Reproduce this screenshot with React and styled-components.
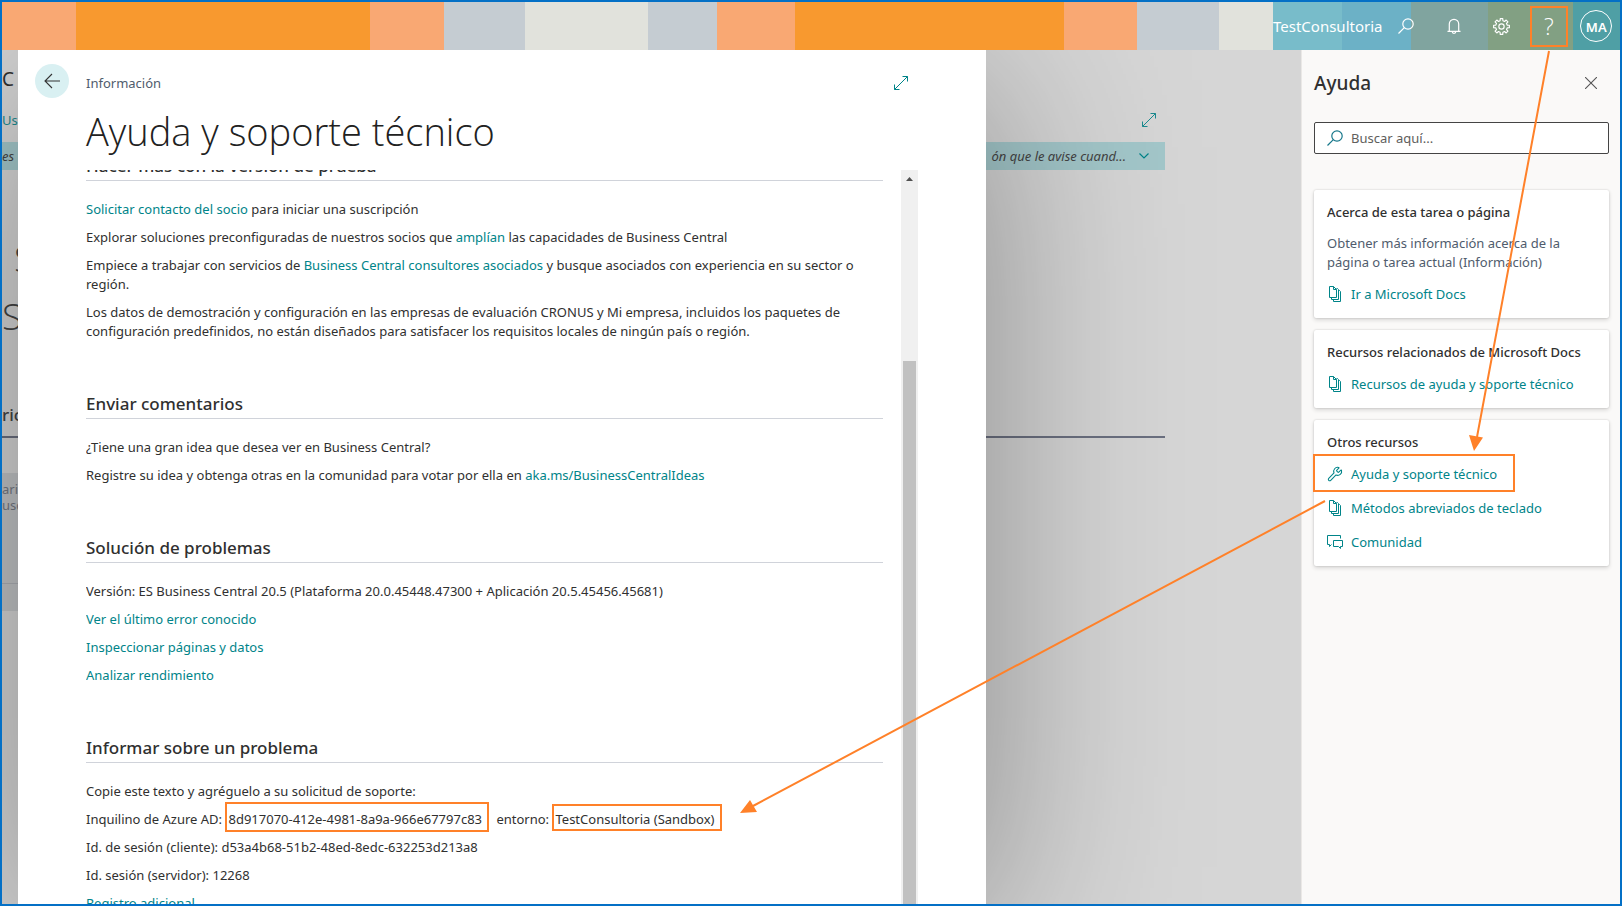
import React, { useState } from 'react'
import styled, { createGlobalStyle } from 'styled-components'
import { Wrench } from 'lucide-react'

const teal = '#008489'
const orange = '#ff8129'

const GlobalStyle = createGlobalStyle`
  *, *::before, *::after {
    box-sizing: border-box;
  }
  body {
    margin: 0;
    color: #303030;
    font: 13px/19px 'Noto Sans', 'Open Sans', sans-serif;
  }
  h1, h2, h3, p, ul {
    margin: 0;
    padding: 0;
  }
  button {
    padding: 0;
    border: none;
    background: none;
    font: inherit;
    color: inherit;
    cursor: pointer;
  }
  a {
    color: ${teal};
    text-decoration: none;
  }
  svg {
    display: block;
    flex-shrink: 0;
  }
`

const Frame = styled.div`
  position: relative;
  display: flex;
  flex-direction: column;
  height: 100vh;
  border: 2px solid #0470c6;
  overflow: hidden;
`
const TopBar = styled.header`
  display: flex;
  flex: none;
  height: 48px;
  background: linear-gradient(
    90deg,
    #f9a873 74px,
    #f8992f 74px 368px,
    #f9a873 368px 442px,
    #c5ccd2 442px 523px,
    #e1e2dc 523px 646px,
    #c5ccd2 646px 715px,
    #f9a873 715px 793px,
    #f8992f 793px 1062px,
    #f9a873 1062px 1135px,
    #c5ccd2 1135px 1217px,
    #e1e2dc 1217px
  );
`
const Shell = styled.div`
  display: flex;
  align-items: center;
  width: 347px;
  margin-left: auto;
  color: #fff;
  background: linear-gradient(
    90deg,
    #78bcca 69px,
    #6cb1c6 69px 138px,
    #80a49f 138px 215px,
    #82a083 215px 300px,
    #4f9fa5 300px
  );
`
const Environment = styled.span`
  flex: 1;
  font-size: 15px;
  line-height: 20px;
`
const ShellButton = styled.button`
  display: flex;
  align-items: center;
  justify-content: center;
  width: 48px;
  height: 48px;
`
const HelpMark = styled.span`
  display: flex;
  align-items: center;
  justify-content: center;
  width: 38px;
  height: 41px;
  border: 2px solid ${orange};
  font: 300 23px/30px 'Open Sans', sans-serif;
`
const Avatar = styled.span`
  width: 32px;
  height: 32px;
  border: 1px solid #fff;
  border-radius: 50%;
  font-size: 13px;
  font-weight: 600;
  line-height: 32px;
  text-align: center;
`
const Body = styled.div`
  display: flex;
  flex: 1;
  min-height: 0;
`

const Workspace = styled.main`
  position: relative;
  flex: 1;
  min-width: 0;
  overflow: hidden;
  background: #d6d6d6;
`
const Page = styled.div`
  padding: 15px 136px 0 0;
`
const PageBrand = styled.div`
  height: 28px;
  font-size: 19px;
  line-height: 28px;
`
const PageNav = styled.div`
  display: flex;
  align-items: center;
  justify-content: space-between;
  height: 49px;
  padding: 5px 8px 0 0;
  color: #1b8a8f;
`
const PageNotice = styled.div`
  display: flex;
  align-items: center;
  height: 28px;
  padding-right: 16px;
  gap: 13px;
  background: #a3c7ca;
  color: #444;
  font-style: italic;
  white-space: nowrap;
`
const NoticeEnd = styled.span`
  margin-left: auto;
`
const PageHeading = styled.div`
  margin-top: 59px;
  font: 300 37px/58px 'Open Sans', sans-serif;
  text-indent: -8px;
  color: #444;
`
const HeadingFirst = styled.div`
  padding-left: 20px;
`
const PageTab = styled.div`
  margin-top: 58px;
  height: 35px;
  border-bottom: 2px solid #6b7080;
  font-size: 17px;
  font-weight: 500;
  line-height: 24px;
  color: #444;
`
const PageTile = styled.div`
  width: 400px;
  height: 138px;
  margin-top: 35px;
  padding-top: 8px;
  background: #c3c5c7;
  color: #757a84;
  line-height: 16px;
`
const TileRule = styled.div`
  height: 71px;
  border-bottom: 1px solid #aeb1b6;
`

const Dialog = styled.section`
  position: absolute;
  inset: 0 315px 0 16px;
  display: flex;
  flex-direction: column;
  background: #fff;
  box-shadow: 0 30px 190px rgba(0, 0, 0, 0.37);
`
const DialogBar = styled.div`
  display: flex;
  align-items: center;
  gap: 17px;
  height: 52px;
  padding: 14px 77px 0 17px;
  color: #505c6d;
`
const BackButton = styled.button`
  display: flex;
  align-items: center;
  justify-content: center;
  align-self: flex-start;
  width: 34px;
  height: 34px;
  border-radius: 50%;
  background: #d9f0f2 !important;
  color: #333 !important;
`
const ExpandButton = styled.button`
  margin-left: auto;
  color: ${teal} !important;
`
const DialogTitle = styled.h1`
  margin: 4px 0 14px;
  padding-left: 68px;
  font: 300 38px/50px 'Open Sans', sans-serif;
  color: #212121;
`
const DialogBody = styled.div`
  display: flex;
  flex: 1;
  gap: 18px;
  min-height: 0;
  padding: 0 68px;
`
const Content = styled.div`
  flex: 1;
  overflow: hidden;
`
/* the list is scrolled past the top of its first heading */
const Scrolled = styled.div`
  display: flex;
  flex-direction: column;
  gap: 51px;
  margin-top: -16px;
`
const Section = styled.section`
  display: flex;
  flex-direction: column;
  gap: 9px;
`
const SectionTitle = styled.h2`
  margin-bottom: 10px;
  padding-bottom: 2px;
  border-bottom: 1px solid #d0d3da;
  font-size: 17px;
  font-weight: 500;
  line-height: 24px;
`
const IdMark = styled.mark`
  margin-right: 4px;
  padding: 6px 5px 2px 1px;
  border: 2px solid ${orange};
  background: none;
  color: inherit;
`
const EnvMark = styled(IdMark)`
  padding: 4px 6px 1px 1px;
`
const Scrollbar = styled.div`
  display: flex;
  flex-direction: column;
  align-items: center;
  gap: 180px;
  width: 17px;
  padding-top: 7px;
  background: #f0f0f0;
`
const Thumb = styled.div`
  flex: 1;
  width: 13px;
  background: #c1c1c1;
`

const HelpPane = styled.aside`
  display: flex;
  flex-direction: column;
  width: 319px;
  padding: 19px 11px 0 12px;
  border-left: 1px solid #eae8e6;
  background: #faf9f8;
`
const PaneHeader = styled.div`
  display: flex;
  align-items: center;
  justify-content: space-between;
  padding-right: 12px;
`
const PaneTitle = styled.h2`
  font-size: 19px;
  font-weight: 500;
  line-height: 28px;
`
const SearchBox = styled.label`
  display: flex;
  align-items: center;
  gap: 8px;
  height: 32px;
  margin: 25px 0 36px;
  padding: 0 12px;
  border: 1px solid #444;
  border-radius: 2px;
  background: #fff;
  color: #16778a;
`
const SearchInput = styled.input`
  flex: 1;
  min-width: 0;
  padding: 0;
  border: none;
  outline: none;
  font: inherit;
  color: #303030;
  &::placeholder {
    color: #605e5c;
    opacity: 1;
  }
`
const Cards = styled.div`
  display: flex;
  flex-direction: column;
  gap: 12px;
`
const Card = styled.section`
  display: flex;
  flex-direction: column;
  gap: 12px;
  padding: 12px 13px 14px;
  border-radius: 2px;
  background: #fff;
  box-shadow: 0 0 2px rgba(0, 0, 0, 0.18), 0 2px 4px rgba(0, 0, 0, 0.14);
`
const CardTitle = styled.h3`
  font-size: 13px;
  font-weight: 500;
  line-height: 20px;
`
const CardText = styled.p`
  color: #505c6d;
`
const LinkList = styled.ul`
  display: flex;
  flex-direction: column;
  gap: 14px;
  list-style: none;
`
const ResourceLink = styled.a`
  position: relative;
  display: flex;
  align-items: center;
  gap: 8px;
  line-height: 20px;
  ${(props) =>
    props.$marked &&
    `&::after {
      content: '';
      position: absolute;
      inset: -10px auto -8px -14px;
      width: 202px;
      border: 2px solid ${orange};
    }`}
`
const Arrows = styled.svg`
  position: absolute;
  top: -2px;
  left: -2px;
  pointer-events: none;
`

const SearchIcon = () => (
  <svg width="16" height="16" viewBox="0 0 16 16" fill="none" stroke="currentColor" strokeWidth="1.2">
    <circle cx="10" cy="6" r="5.2" />
    <path d="M6.3 9.7L.5 15.5" />
  </svg>
)
const BellIcon = () => (
  <svg width="16" height="16" viewBox="0 0 16 16" fill="none" stroke="currentColor" strokeWidth="1.2">
    <path d="M1.5 13.3h13M3.3 13.3V6a4.7 4.7 0 0 1 9.4 0v7.3M6.2 13.6a1.8 1.8 0 0 0 3.6 0" />
  </svg>
)

const gearPoints = Array.from({ length: 8 }, (_, i) =>
  [
    [-14, 5.5],
    [-9, 7.5],
    [9, 7.5],
    [14, 5.5],
  ]
    .map(([deg, r]) => {
      const a = ((i * 45 + deg) * Math.PI) / 180
      return `${(8 + r * Math.cos(a)).toFixed(2)},${(8 + r * Math.sin(a)).toFixed(2)}`
    })
    .join(' '),
).join(' ')

const GearIcon = () => (
  <svg width="17" height="17" viewBox="0 0 16 16" fill="none" stroke="currentColor" strokeWidth="1.1">
    <polygon points={gearPoints} strokeLinejoin="round" />
    <circle cx="8" cy="8" r="2.5" />
  </svg>
)
const BackIcon = () => (
  <svg width="16" height="16" viewBox="0 0 16 16" fill="none" stroke="currentColor" strokeWidth="1.1">
    <path d="M16 8H1M8 1L1 8l7 7" />
  </svg>
)
const ExpandIcon = () => (
  <svg width="16" height="16" viewBox="0 0 16 16" fill="none" stroke="currentColor" strokeWidth="1">
    <path d="M1.5 14.5l13-13M9.5 1.5h5v5M1.5 9.5v5h5" />
  </svg>
)
const ChevronIcon = () => (
  <svg width="10" height="6" viewBox="0 0 10 6" fill="none" stroke={teal} strokeWidth="1.2">
    <path d="M.5.5L5 5 9.5.5" />
  </svg>
)
const CloseIcon = () => (
  <svg width="12" height="12" viewBox="0 0 12 12" fill="none" stroke="#555" strokeWidth="1.1">
    <path d="M0 0l12 12M12 0L0 12" />
  </svg>
)
const PagesIcon = () => (
  <svg width="16" height="16" viewBox="0 0 16 16" fill="none" stroke="currentColor" strokeWidth="1">
    <path d="M2.5.5h4l3 3v8h-7zM6.5.5v3h3M9.5 2.5h1l1 1v10h-7v-2M11.5 4.5h1l1 1v10h-7v-2" />
  </svg>
)
const ChatIcon = () => (
  <svg width="16" height="16" viewBox="0 0 16 16" fill="none" stroke="currentColor" strokeWidth="1">
    <path d="M4.5 10.5l-2 2v-2h-2v-9h13v3M6.5 6.5h9v6h-2v2l-2-2h-5z" />
  </svg>
)

const App = () => {
  const [query, setQuery] = useState('')

  return (
    <>
      <GlobalStyle />
      <Frame>
        <TopBar>
          <Shell>
            <Environment>TestConsultoria</Environment>
            <ShellButton aria-label="Buscar">
              <SearchIcon />
            </ShellButton>
            <ShellButton aria-label="Notificaciones">
              <BellIcon />
            </ShellButton>
            <ShellButton aria-label="Configuración">
              <GearIcon />
            </ShellButton>
            <ShellButton aria-label="Ayuda">
              <HelpMark>?</HelpMark>
            </ShellButton>
            <ShellButton aria-label="Cuenta">
              <Avatar>MA</Avatar>
            </ShellButton>
          </Shell>
        </TopBar>
        <Body>
          <Workspace>
            <Page aria-hidden="true">
              <PageBrand>C</PageBrand>
              <PageNav>
                Usu
                <ExpandIcon />
              </PageNav>
              <PageNotice>
                es
                <NoticeEnd>ón que le avise cuand...</NoticeEnd>
                <ChevronIcon />
              </PageNotice>
              <PageHeading>
                <HeadingFirst>S</HeadingFirst>S
              </PageHeading>
              <PageTab>ric</PageTab>
              <PageTile>
                ario
                <br />
                usc
                <TileRule />
              </PageTile>
            </Page>
            <Dialog aria-label="Ayuda y soporte técnico">
              <DialogBar>
                <BackButton aria-label="Atrás">
                  <BackIcon />
                </BackButton>
                Información
                <ExpandButton aria-label="Expandir">
                  <ExpandIcon />
                </ExpandButton>
              </DialogBar>
              <DialogTitle>Ayuda y soporte técnico</DialogTitle>
              <DialogBody>
                <Content>
                  <Scrolled>
                    <Section>
                      <SectionTitle>Hacer más con la versión de prueba</SectionTitle>
                      <p>
                        <a href="#socio">Solicitar contacto del socio</a> para iniciar una suscripción
                      </p>
                      <p>
                        Explorar soluciones preconfiguradas de nuestros socios que{' '}
                        <a href="#amplian">amplían</a> las capacidades de Business Central
                      </p>
                      <p>
                        Empiece a trabajar con servicios de{' '}
                        <a href="#consultores">Business Central consultores asociados</a> y busque
                        asociados con experiencia en su sector o región.
                      </p>
                      <p>
                        Los datos de demostración y configuración en las empresas de evaluación CRONUS y
                        Mi empresa, incluidos los paquetes de configuración predefinidos, no están
                        diseñados para satisfacer los requisitos locales de ningún país o región.
                      </p>
                    </Section>
                    <Section>
                      <SectionTitle>Enviar comentarios</SectionTitle>
                      <p>¿Tiene una gran idea que desea ver en Business Central?</p>
                      <p>
                        Registre su idea y obtenga otras en la comunidad para votar por ella en{' '}
                        <a href="#ideas">aka.ms/BusinessCentralIdeas</a>
                      </p>
                    </Section>
                    <Section>
                      <SectionTitle>Solución de problemas</SectionTitle>
                      <p>
                        Versión: ES Business Central 20.5 (Plataforma 20.0.45448.47300 + Aplicación
                        20.5.45456.45681)
                      </p>
                      <p>
                        <a href="#error">Ver el último error conocido</a>
                      </p>
                      <p>
                        <a href="#inspeccionar">Inspeccionar páginas y datos</a>
                      </p>
                      <p>
                        <a href="#rendimiento">Analizar rendimiento</a>
                      </p>
                    </Section>
                    <Section>
                      <SectionTitle>Informar sobre un problema</SectionTitle>
                      <p>Copie este texto y agréguelo a su solicitud de soporte:</p>
                      <p>
                        Inquilino de Azure AD: <IdMark>8d917070-412e-4981-8a9a-966e67797c83</IdMark>{' '}
                        entorno: <EnvMark>TestConsultoria (Sandbox)</EnvMark>
                      </p>
                      <p>Id. de sesión (cliente): d53a4b68-51b2-48ed-8edc-632253d213a8</p>
                      <p>Id. sesión (servidor): 12268</p>
                      <p>
                        <a href="#registro">Registro adicional</a>
                      </p>
                    </Section>
                  </Scrolled>
                </Content>
                <Scrollbar>
                  <svg width="7" height="4" viewBox="0 0 7 4" fill="#505050">
                    <path d="M0 4h7L3.5 0z" />
                  </svg>
                  <Thumb />
                </Scrollbar>
              </DialogBody>
            </Dialog>
          </Workspace>
          <HelpPane>
            <PaneHeader>
              <PaneTitle>Ayuda</PaneTitle>
              <button aria-label="Cerrar">
                <CloseIcon />
              </button>
            </PaneHeader>
            <SearchBox>
              <SearchIcon />
              <SearchInput
                type="text"
                aria-label="Buscar aquí"
                placeholder="Buscar aquí..."
                value={query}
                onChange={(event) => setQuery(event.target.value)}
              />
            </SearchBox>
            <Cards>
              <Card>
                <CardTitle>Acerca de esta tarea o página</CardTitle>
                <CardText>
                  Obtener más información acerca de la página o tarea actual (Información)
                </CardText>
                <ResourceLink href="#docs">
                  <PagesIcon />
                  Ir a Microsoft Docs
                </ResourceLink>
              </Card>
              <Card>
                <CardTitle>Recursos relacionados de Microsoft Docs</CardTitle>
                <ResourceLink href="#recursos">
                  <PagesIcon />
                  Recursos de ayuda y soporte técnico
                </ResourceLink>
              </Card>
              <Card>
                <CardTitle>Otros recursos</CardTitle>
                <LinkList>
                  <li>
                    <ResourceLink href="#ayuda" $marked>
                      <Wrench size={16} strokeWidth={1.6} />
                      Ayuda y soporte técnico
                    </ResourceLink>
                  </li>
                  <li>
                    <ResourceLink href="#teclado">
                      <PagesIcon />
                      Métodos abreviados de teclado
                    </ResourceLink>
                  </li>
                  <li>
                    <ResourceLink href="#comunidad">
                      <ChatIcon />
                      Comunidad
                    </ResourceLink>
                  </li>
                </LinkList>
              </Card>
            </Cards>
          </HelpPane>
        </Body>
        <Arrows width="1622" height="906" stroke={orange} strokeWidth="2" fill={orange}>
          <path d="M1549 51L1477 437M1325 501L753 806" />
          <path d="M1469 435l14 2.5L1474 451zM750 800l7 12-17 1z" stroke="none" />
        </Arrows>
      </Frame>
    </>
  )
}

export default App
